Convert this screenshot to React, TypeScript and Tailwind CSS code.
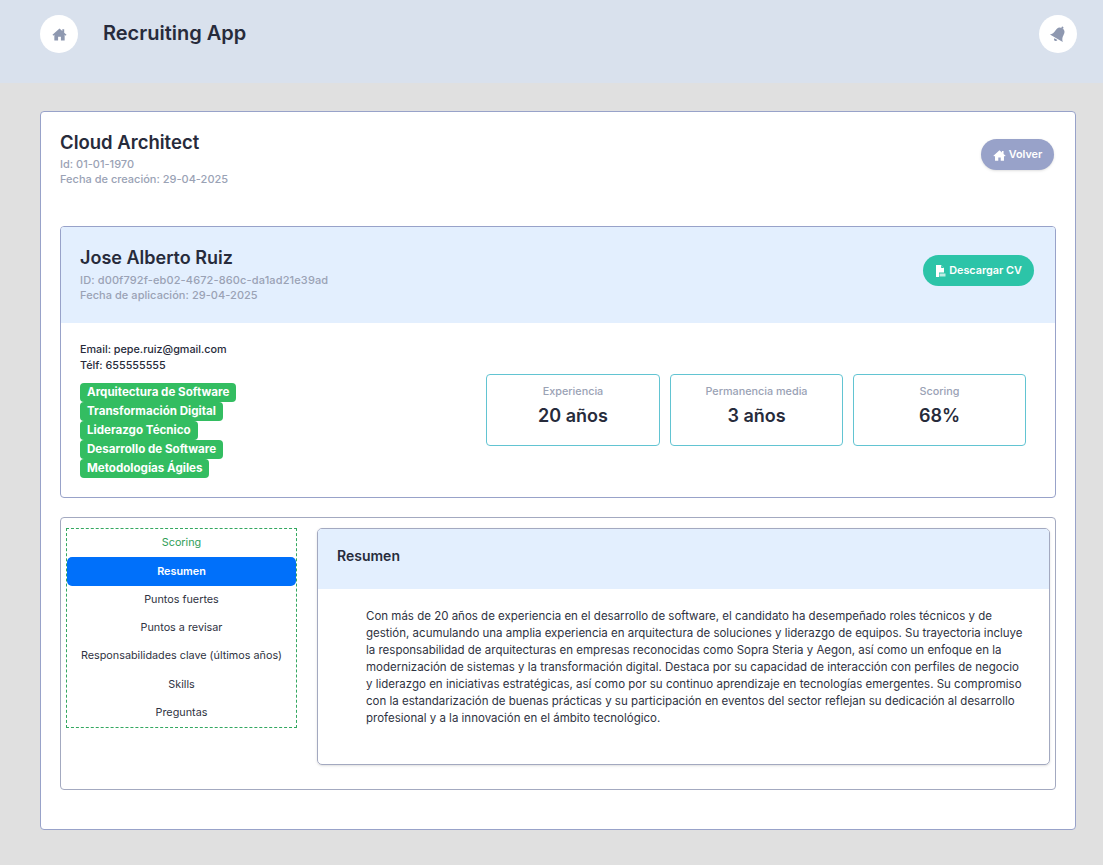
const skills = [
  "Arquitectura de Software",
  "Transformación Digital",
  "Liderazgo Técnico",
  "Desarrollo de Software",
  "Metodologías Ágiles",
];

const stats = [
  { label: "Experiencia", value: "20 años", width: "w-[174px]" },
  { label: "Permanencia media", value: "3 años", width: "w-[173px]" },
  { label: "Scoring", value: "68%", width: "w-[173px]" },
];

const tabs = [
  "Puntos fuertes",
  "Puntos a revisar",
  "Responsabilidades clave (últimos años)",
  "Skills",
  "Preguntas",
];

function HomeIcon({ size }: { size: number }) {
  return (
    <svg width={size} height={size} viewBox="0 0 16 16" fill="currentColor">
      <path d="M8 1.5 0.5 8.2 1.4 9.2 2.5 8.3V14.5H6.5V10.5H9.5V14.5H13.5V8.3L14.6 9.2 15.5 8.2 13 6V2.5H11V4.2Z" />
    </svg>
  );
}

function BellIcon() {
  return (
    <svg width="19" height="19" viewBox="0 0 16 16" fill="currentColor" className="rotate-[30deg]">
      <circle cx="8" cy="1.4" r="0.9" />
      <path d="M8 1.9C4.8 1.9 4.1 4.2 4.1 6.4 4.1 8.8 3.2 10.2 1.8 11.6H14.2C12.8 10.2 11.9 8.8 11.9 6.4 11.9 4.2 11.2 1.9 8 1.9Z" />
      <path d="M6.5 12.4H9.5C9.5 13.4 8.9 14.1 8 14.1 7.1 14.1 6.5 13.4 6.5 12.4Z" />
    </svg>
  );
}

function PdfIcon() {
  return (
    <svg width="11" height="12" viewBox="0 0 11 12">
      <path d="M1 0H6L9 3V7.5H4V12H1Z" fill="white" />
      <path d="M6.2 0.2V3H9Z" fill="#2cc4a8" />
      <rect x="4.5" y="8.5" width="6" height="3" fill="white" opacity="0.7" />
    </svg>
  );
}

function App() {
  return (
    <div className="min-h-[865px] bg-[#e0e0e0] text-[#272b3b] font-['Inter',sans-serif]">
      {/* header */}
      <div className="h-[83px] bg-[#d9e1ed] pl-10 pr-[26px] pt-[15px] flex items-start">
        <div className="w-[38px] h-[38px] rounded-full bg-white flex items-center justify-center text-[#8e98b0]">
          <HomeIcon size={15} />
        </div>
        <h1 className="ml-[25px] mt-[4px] text-[20px] leading-[28px] font-semibold">Recruiting App</h1>
        <div className="ml-auto w-[38px] h-[38px] rounded-full bg-white flex items-center justify-center text-[#8e98b0]">
          <BellIcon />
        </div>
      </div>

      <div className="pl-10 pr-[27px] pt-7">
        <div className="h-[719px] bg-white border border-[#98a2c9] rounded-[4px] px-[19px] pt-[19px]">
          <div className="flex items-start justify-between h-[95px]">
            <div>
              <h2 className="text-[18.5px] leading-[22px] font-semibold">Cloud Architect</h2>
              <p className="mt-[4px] text-[11px] leading-[15px] font-medium text-[#9aa2b5]">Id: 01-01-1970</p>
              <p className="text-[11px] leading-[15px] font-medium text-[#9aa2b5]">Fecha de creación: 29-04-2025</p>
            </div>
            <button className="mt-2 mr-[2px] h-[31px] w-[73px] pt-px rounded-full bg-[#98a2c9] text-white text-[10.8px] font-semibold flex items-center justify-center gap-[3px] shadow-sm">
              <HomeIcon size={13} /> Volver
            </button>
          </div>

          {/* candidate */}
          <div className="h-[272px] border border-[#98a2c9] rounded-[4px] overflow-hidden">
            <div className="h-[96px] bg-[#e3effe] px-[19px] pt-[19px] flex items-start justify-between">
              <div>
                <h3 className="text-[18px] leading-[24px] font-semibold">Jose Alberto Ruiz</h3>
                <p className="mt-[3px] text-[11px] tracking-[0.13px] leading-[15px] font-medium text-[#9aa2b5]">ID: d00f792f-eb02-4672-860c-da1ad21e39ad</p>
                <p className="text-[11px] tracking-[0.05px] leading-[15px] font-medium text-[#9aa2b5]">Fecha de aplicación: 29-04-2025</p>
              </div>
              <button className="mt-[9px] mr-[2px] h-[31px] w-[111px] pt-px rounded-full bg-[#2cc4a8] text-white text-[10.8px] font-semibold flex items-center justify-center gap-[3px]">
                <PdfIcon /> Descargar CV
              </button>
            </div>
            <div className="flex items-start pl-[19px] pt-[19px]">
              <div className="w-[406px]">
                <p className="text-[10.8px] leading-4 font-medium">Email: pepe.ruiz@gmail.com</p>
                <p className="text-[10.8px] leading-4 font-medium">Télf: 655555555</p>
                <div className="mt-[9px] flex flex-col items-start">
                  {skills.map((s) => (
                    <span key={s} className="h-[19px] px-[7px] rounded-[4px] bg-[#33bd61] text-white text-[11.6px] leading-[19px] font-bold">
                      {s}
                    </span>
                  ))}
                </div>
              </div>
              <div className="mt-[32px] flex gap-[10px]">
                {stats.map((c) => (
                  <div key={c.label} className={`${c.width} h-[72px] border border-[#62c4d2] rounded-[4px] text-center pt-[10px]`}>
                    <p className="text-[10.8px] leading-[14px] font-medium text-[#9aa2b5]">{c.label}</p>
                    <p className="mt-[5px] text-[18px] leading-[24px] font-semibold">{c.value}</p>
                  </div>
                ))}
              </div>
            </div>
          </div>

          {/* tabs */}
          <div className="mt-[19px] h-[273px] border border-[#a3a9c0] rounded-[4px] flex items-start pl-[5px] pr-[5px] pt-[10px] gap-5">
            <div className="w-[231px] h-[200px] border border-dashed border-[#33a860] flex flex-col text-center text-[10.8px]">
              <div className="h-[28px] leading-[28px] text-[#2f9e58]">Scoring</div>
              <div className="h-[29px] leading-[29px] bg-[#0070fa] text-white rounded-[5px] font-semibold">Resumen</div>
              {tabs.map((t) => (
                <div key={t} className="h-[28.3px] leading-[27px] text-[#2f3342]">{t}</div>
              ))}
            </div>
            <div className="flex-1 h-[237px] border border-[#a3a9c0] rounded-[5px] overflow-hidden shadow-sm">
              <div className="h-[60px] bg-[#e3effe] px-[19px] pb-2 flex items-center text-[14px] font-semibold">Resumen</div>
              <p className="pl-[48px] pr-[24px] pt-[19px] text-[11.5px] leading-[17px] text-[#2f3342]">
                Con más de 20 años de experiencia en el desarrollo de software, el candidato ha desempeñado roles técnicos y de gestión, acumulando una amplia experiencia en arquitectura de soluciones y liderazgo de equipos. Su trayectoria incluye la responsabilidad de arquitecturas en empresas reconocidas como Sopra Steria y Aegon, así como un enfoque en la modernización de sistemas y la transformación digital. Destaca por su capacidad de interacción con perfiles de negocio y liderazgo en iniciativas estratégicas, así como por su continuo aprendizaje en tecnologías emergentes. Su compromiso con la estandarización de buenas prácticas y su participación en eventos del sector reflejan su dedicación al desarrollo profesional y a la innovación en el ámbito tecnológico.
              </p>
            </div>
          </div>
        </div>
      </div>
    </div>
  );
}

export default App;
